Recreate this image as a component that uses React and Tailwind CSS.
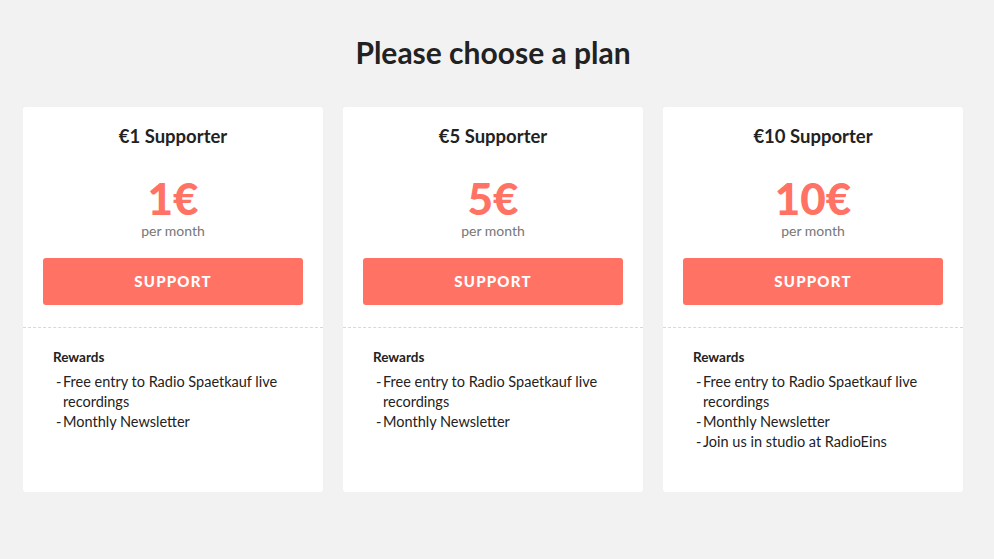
import React from 'react';

const plans = [
  { name: '€1 Supporter', price: '1', rewards: ['Free entry to Radio Spaetkauf live recordings', 'Monthly Newsletter'] },
  { name: '€5 Supporter', price: '5', rewards: ['Free entry to Radio Spaetkauf live recordings', 'Monthly Newsletter'] },
  {
    name: '€10 Supporter',
    price: '10',
    rewards: ['Free entry to Radio Spaetkauf live recordings', 'Monthly Newsletter', 'Join us in studio at RadioEins'],
  },
];

const PlanCard = ({ plan }) => (
  <div className="bg-white rounded-[3px] h-[385px] flex flex-col">
    <div className="px-5 pt-[11px] pb-[22px] flex flex-col items-center">
      <h3 className="text-[18.5px] font-bold text-[#222] leading-[36px]">{plan.name}</h3>
      <div className="mt-[22px] text-[44px] font-black text-[#ff7264] leading-[44px]">
        {plan.price}€
      </div>
      <div className="text-[14px] text-[#777] leading-[20px] mt-[1px]">per month</div>
      <button className="mt-[17px] w-full h-[47px] bg-[#ff7264] text-white text-[15px] font-black tracking-[0.08em] rounded-[3px]">
        SUPPORT
      </button>
    </div>
    <div className="border-t border-dashed border-[#d8d8d8]" />
    <div className="pl-[30px] pr-[30px] pt-[19px]">
      <div className="text-[13.5px] font-bold text-[#222] leading-[20px]">Rewards</div>
      <ul className="mt-[5px] text-[14.5px] text-[#222] leading-[20px]">
        {plan.rewards.map((r) => (
          <li key={r} className="flex pl-[3px]">
            <span className="w-[7px] shrink-0">-</span>
            <span>{r}</span>
          </li>
        ))}
      </ul>
    </div>
  </div>
);

const App = () => {
  return (
    <div className="min-h-[559px] bg-[#f2f2f2]" style={{ fontFamily: 'Lato, "Noto Sans", sans-serif' }}>
      <div className="w-[940px] ml-[23px] pt-[34px]">
        <h1 className="text-center text-[30px] font-bold text-[#222] leading-[36px]">Please choose a plan</h1>
        <div className="grid grid-cols-3 gap-5 mt-[37px]">
          {plans.map((p) => (
            <PlanCard key={p.name} plan={p} />
          ))}
        </div>
      </div>
    </div>
  );
};

export default App;
